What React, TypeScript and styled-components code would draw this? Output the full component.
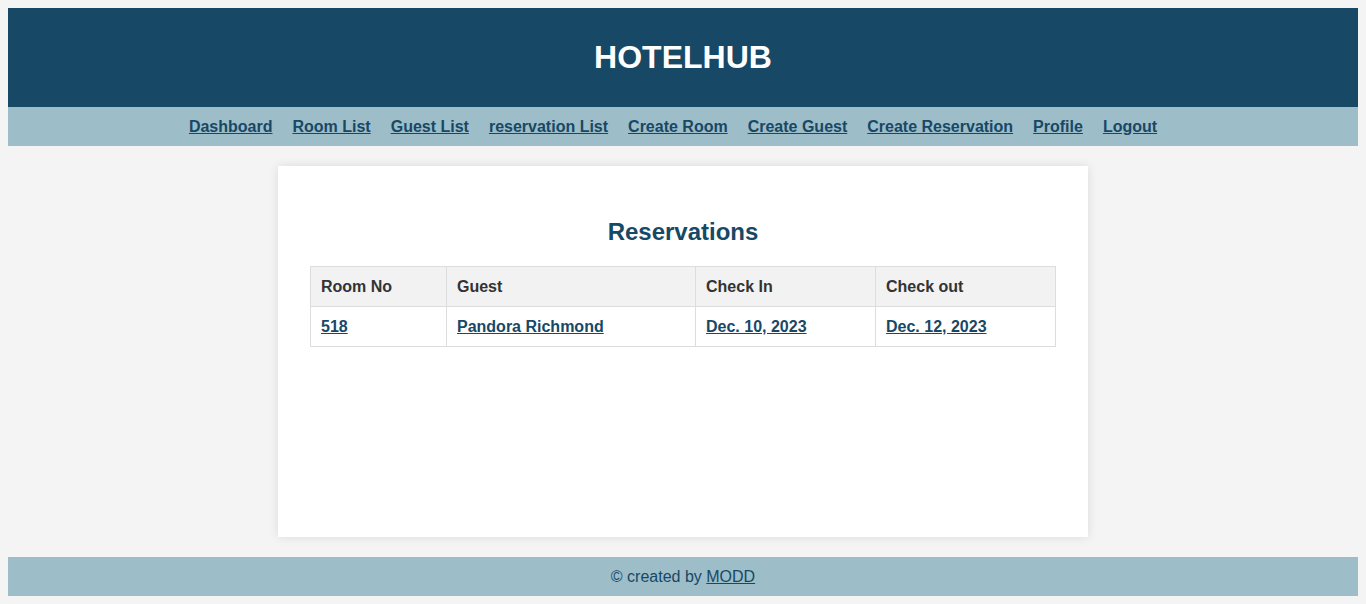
import { FC } from "react";
import styled, { createGlobalStyle } from "styled-components";

const GlobalStyle = createGlobalStyle`
  body {
    margin: 8px;
    background: #f4f4f4;
    font-family: "Liberation Sans", Arial, sans-serif;
    color: #333;
  }
`;

const Header = styled.header`
  background: #174866;
  padding: 31px 0;
  text-align: center;
`;

const Title = styled.h1`
  margin: 0;
  font-size: 32px;
  line-height: 37px;
  font-weight: bold;
  color: #fff;
`;

const Nav = styled.nav`
  display: flex;
  justify-content: center;
  background: #9dbdc8;
  padding: 10px 0;
`;

const NavLink = styled.a`
  margin-right: 20px;
  font-size: 16px;
  line-height: 19px;
  font-weight: bold;
  color: #174866;
  text-decoration: underline;
`;

const Card = styled.main`
  box-sizing: border-box;
  width: 60%;
  min-height: 371px;
  margin: 20px auto;
  padding: 32px;
  background: #fff;
  box-shadow: 0 0 10px rgba(0, 0, 0, 0.1);
`;

const Heading = styled.h2`
  margin: 20px 0;
  font-size: 24px;
  line-height: 28px;
  text-align: center;
  color: #174866;
`;

const Table = styled.table`
  width: 100%;
  border-collapse: collapse;
`;

const Th = styled.th<{ $width: number }>`
  width: ${(p) => p.$width}px;
  padding: 10px;
  border: 1px solid #ddd;
  background: #f2f2f2;
  font-size: 16px;
  line-height: 19px;
  text-align: left;
  color: #333;
`;

const Td = styled.td`
  padding: 10px;
  border: 1px solid #ddd;
  font-size: 16px;
  line-height: 19px;
`;

const CellLink = styled.a`
  font-weight: bold;
  color: #174866;
  text-decoration: underline;
`;

const Footer = styled.footer`
  background: #9dbdc8;
  padding: 10px 0;
  text-align: center;
  font-size: 16px;
  line-height: 19px;
  color: #174866;
`;

const FooterLink = styled.a`
  color: #174866;
  text-decoration: underline;
`;

const links = [
  "Dashboard",
  "Room List",
  "Guest List",
  "reservation List",
  "Create Room",
  "Create Guest",
  "Create Reservation",
  "Profile",
  "Logout",
];

const columns = [
  { label: "Room No", width: 115 },
  { label: "Guest", width: 228 },
  { label: "Check In", width: 159 },
  { label: "Check out", width: 159 },
];

const reservations = [
  { room: "518", guest: "Pandora Richmond", checkIn: "Dec. 10, 2023", checkOut: "Dec. 12, 2023" },
];

const App: FC = () => {
  return (
    <>
      <GlobalStyle />
      <Header>
        <Title>HOTELHUB</Title>
      </Header>
      <Nav>
        {links.map((l) => (
          <NavLink key={l} href="#">
            {l}
          </NavLink>
        ))}
      </Nav>
      <Card>
        <Heading>Reservations</Heading>
        <Table>
          <thead>
            <tr>
              {columns.map((c) => (
                <Th key={c.label} $width={c.width}>
                  {c.label}
                </Th>
              ))}
            </tr>
          </thead>
          <tbody>
            {reservations.map((r) => (
              <tr key={r.room}>
                <Td>
                  <CellLink href="#">{r.room}</CellLink>
                </Td>
                <Td>
                  <CellLink href="#">{r.guest}</CellLink>
                </Td>
                <Td>
                  <CellLink href="#">{r.checkIn}</CellLink>
                </Td>
                <Td>
                  <CellLink href="#">{r.checkOut}</CellLink>
                </Td>
              </tr>
            ))}
          </tbody>
        </Table>
      </Card>
      <Footer>
        © created by <FooterLink href="#">MODD</FooterLink>
      </Footer>
    </>
  );
};

export default App;
